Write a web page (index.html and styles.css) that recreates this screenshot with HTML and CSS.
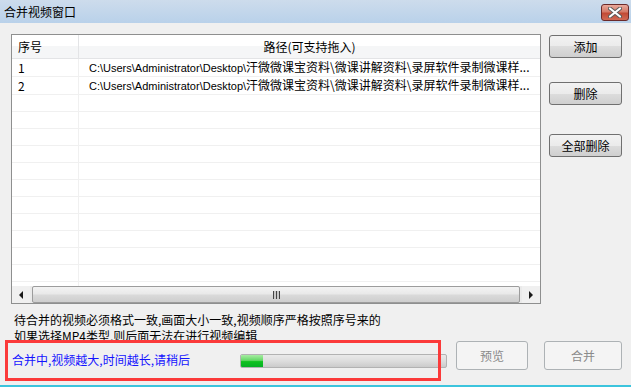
FILE: index.html
```html
<!DOCTYPE html>
<html lang="zh-CN">

<head>
    <meta charset="UTF-8">
    <title>合并视频窗口</title>
    <link rel="stylesheet" href="styles.css">
</head>

<body>
    <div class="window">
        <div class="titlebar">
            <span class="title">合并视频窗口</span>
            <div class="close">
                <svg width="14" height="11" viewBox="0 0 14 11">
                    <path d="M2 1.5 L12 9.5 M12 1.5 L2 9.5" stroke="#5a5a5a" stroke-width="4" stroke-linecap="round"/>
                    <path d="M2 1.5 L12 9.5 M12 1.5 L2 9.5" stroke="#ffffff" stroke-width="2.2" stroke-linecap="round"/>
                </svg>
            </div>
        </div>

        <div class="content">
            <div class="top">
                <div class="list">
                    <div class="list-view">
                        <table class="grid">
                            <thead>
                                <tr>
                                    <th class="col-no">序号</th>
                                    <th class="col-path">路径(可支持拖入)</th>
                                </tr>
                            </thead>
                            <tbody>
                                <tr>
                                    <td>1</td>
                                    <td><span class="latin">C:\Users\Administrator\Desktop\</span>汗微微课宝资料\微课讲解资料\录屏软件录制微课样...</td>
                                </tr>
                                <tr>
                                    <td>2</td>
                                    <td><span class="latin">C:\Users\Administrator\Desktop\</span>汗微微课宝资料\微课讲解资料\录屏软件录制微课样...</td>
                                </tr>
                                <tr><td></td><td></td></tr>
                                <tr><td></td><td></td></tr>
                                <tr><td></td><td></td></tr>
                                <tr><td></td><td></td></tr>
                                <tr><td></td><td></td></tr>
                                <tr><td></td><td></td></tr>
                                <tr><td></td><td></td></tr>
                                <tr><td></td><td></td></tr>
                                <tr><td></td><td></td></tr>
                                <tr><td></td><td></td></tr>
                                <tr><td></td><td></td></tr>
                                <tr><td></td><td></td></tr>
                            </tbody>
                        </table>
                    </div>
                    <div class="hscroll">
                        <span class="arrow arrow-left"></span>
                        <div class="thumb"><span class="grip"></span></div>
                        <span class="arrow arrow-right"></span>
                    </div>
                </div>

                <div class="side">
                    <button class="btn btn-add">添加</button>
                    <button class="btn btn-del">删除</button>
                    <button class="btn btn-clear">全部删除</button>
                </div>
            </div>

            <p class="note">待合并的视频必须格式一致,画面大小一致,视频顺序严格按照序号来的</p>
            <p class="note note-cut">如果选择MP4类型,则后面无法在进行视频编辑</p>

            <div class="status-row">
                <span class="status">合并中,视频越大,时间越长,请稍后</span>
                <div class="progress">
                    <div class="progress-fill" style="width: 22px;"></div>
                </div>
                <button class="btn btn-disabled btn-preview">预览</button>
                <button class="btn btn-disabled btn-merge">合并</button>
            </div>
        </div>

        <div class="mark"></div>
    </div>
</body>

</html>
```

FILE: styles.css
```css
body {
    margin: 0;
    font-family: "Noto Sans CJK SC", "Liberation Sans", sans-serif;
    font-size: 12px;
    color: #000;
    background-color: #f0f0f0;
}

.window {
    position: relative;
    width: 631px;
    height: 387px;
    box-sizing: border-box;
    background-color: #f0f0f0;
    border-bottom: 2px solid #3cc4dd;
    overflow: hidden;
}

.titlebar {
    height: 23px;
    display: flex;
    align-items: center;
    justify-content: space-between;
    padding: 0 2px 0 4px;
    background: linear-gradient(#cddcec, #b9d1ea);
}

.title {
    line-height: 16px;
}

.close {
    width: 28px;
    height: 17px;
    margin-top: 2px;
    box-sizing: border-box;
    border: 1px solid #6b2a2a;
    border-radius: 3px;
    display: flex;
    align-items: center;
    justify-content: center;
    background: linear-gradient(#e9a99c 0%, #d47a68 45%, #c24a35 55%, #d06a55 100%);
}

.content {
    padding-top: 11px;
}

.top {
    display: flex;
    align-items: flex-start;
    padding-left: 11px;
}

.list {
    width: 530px;
    height: 270px;
    box-sizing: border-box;
    border: 1px solid #8e8f8f;
    background-color: #fff;
}

.list-view {
    height: 251px;
    overflow: hidden;
}

.grid {
    width: 528px;
    table-layout: fixed;
    border-collapse: separate;
    border-spacing: 0;
}

.grid th {
    padding: 0;
    line-height: 23px;
    font-weight: normal;
    border-bottom: 1px solid #e3e4e6;
    background: linear-gradient(#ffffff 50%, #f5f6f7 50%);
}

.grid th.col-no {
    width: 60px;
    text-align: left;
    padding-left: 6px;
    border-right: 1px solid #e3e4e6;
}

.grid th.col-path {
    text-align: center;
}

.grid td {
    padding: 0 0 0 6px;
    line-height: 16px;
    height: 16px;
    border-bottom: 1px solid #f0f0f0;
    white-space: nowrap;
    overflow: hidden;
}

.grid td:first-child {
    border-right: 1px solid #f0f0f0;
}

.grid td:nth-child(2) {
    padding-left: 10px;
}

.latin {
    font-family: "Liberation Sans", sans-serif;
    font-size: 11px;
}

.hscroll {
    height: 17px;
    display: flex;
    background-color: #eaeaea;
}

.arrow {
    width: 18px;
    display: flex;
    align-items: center;
    justify-content: center;
    background-color: #f0f0f0;
}

.arrow-left::before {
    content: "";
    border-top: 4px solid transparent;
    border-bottom: 4px solid transparent;
    border-right: 4px solid #1a1a1a;
}

.arrow-right::before {
    content: "";
    border-top: 4px solid transparent;
    border-bottom: 4px solid transparent;
    border-left: 4px solid #1a1a1a;
}

.thumb {
    flex: 1;
    margin: 0 2px;
    box-sizing: border-box;
    border: 1px solid #9c9c9c;
    border-radius: 2px;
    display: flex;
    align-items: center;
    justify-content: center;
    background: linear-gradient(#f3f3f3 0%, #e9e9e9 45%, #d9d9d9 55%, #cecece 100%);
}

.grip {
    width: 7px;
    height: 8px;
    background: repeating-linear-gradient(90deg, #444 0 1px, #c8c8c8 1px 3px);
}

.side {
    display: flex;
    flex-direction: column;
    margin-left: 8px;
}

.btn {
    font-family: "Noto Sans CJK SC", "Liberation Sans", sans-serif;
    font-size: 12px;
    color: #000;
    padding: 0;
    box-sizing: border-box;
    border: 1px solid #707070;
    border-radius: 3px;
    background: linear-gradient(#f2f2f2 0%, #ebebeb 50%, #dddddd 50%, #cfcfcf 100%);
    cursor: pointer;
}

.side .btn {
    width: 73px;
    height: 23px;
}

.btn-add {
    margin-top: 1px;
}

.btn-del {
    margin-top: 24px;
}

.btn-clear {
    margin-top: 29px;
}

.btn-disabled {
    color: #8a8a8a;
    border-color: #adb2b5;
    background: #f4f4f4;
}

.note {
    margin: 0;
    padding-left: 14px;
    line-height: 16px;
}

.note:first-of-type {
    margin-top: 8px;
}

.note-cut {
    height: 13px;
    overflow: hidden;
}

.status-row {
    display: flex;
    align-items: flex-start;
    padding-left: 12px;
}

.status {
    width: 228px;
    margin-top: 11px;
    line-height: 16px;
    color: #1414ff;
}

.progress {
    width: 207px;
    height: 14px;
    margin-top: 13px;
    box-sizing: border-box;
    border: 1px solid #b2b2b2;
    border-radius: 2px;
    background: linear-gradient(#e9e9e9 0%, #dddddd 50%, #cbcbcb 100%);
    overflow: hidden;
}

.progress-fill {
    height: 100%;
    background: linear-gradient(#a8eca4 0%, #64d866 45%, #0fc21f 55%, #06b025 100%);
}

.btn-preview {
    width: 72px;
    height: 29px;
    margin-left: 9px;
}

.btn-merge {
    width: 78px;
    height: 29px;
    margin-left: 16px;
}

/* annotation box drawn over the status line */
.mark {
    position: absolute;
    left: 5px;
    top: 340px;
    width: 436px;
    height: 41px;
    box-sizing: border-box;
    border: 3px solid #fb3a3a;
}
```
